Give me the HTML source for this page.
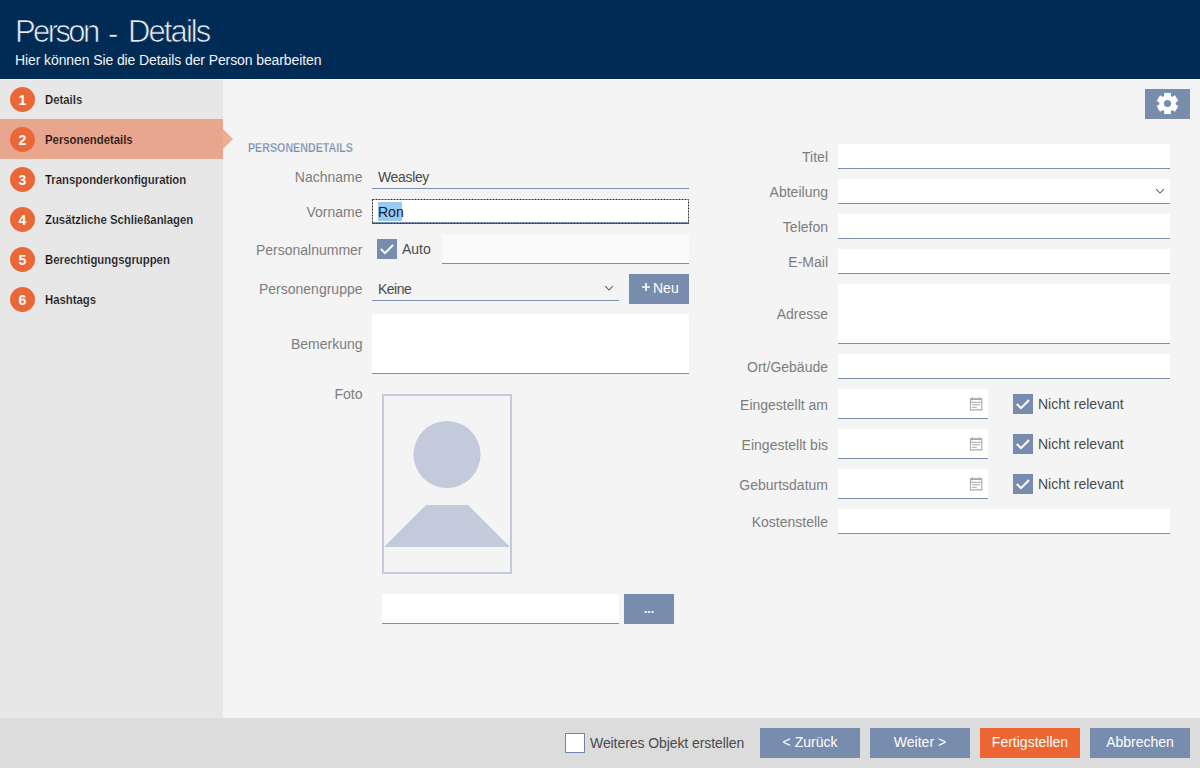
<!DOCTYPE html>
<html><head><meta charset="utf-8">
<style>
*{box-sizing:border-box;margin:0;padding:0}
html,body{width:1200px;height:768px;overflow:hidden;background:#f4f4f4;font-family:"Liberation Sans",sans-serif;position:relative}
.a{position:absolute}
.ttl{top:16px;font-size:31px!important;line-height:31px!important;color:#e9edf3;-webkit-text-stroke:0.7px #002b55}
.t{position:absolute;white-space:nowrap;line-height:14px;font-size:14px}
#hdr{left:0;top:0;width:1200px;height:79px;background:#002b55}
#hline{left:0;top:79px;width:1200px;height:1px;background:linear-gradient(90deg,#f3f1ef 0,#f3f1ef 223px,#fff 223px)}
#side{left:0;top:80px;width:223px;height:638px;background:#e7e7e7}
#foot{left:0;top:718px;width:1200px;height:50px;background:#dcdcdc}
.circ{position:absolute;left:10px;width:25px;height:25px;border-radius:50%;background:#ea6837;color:#fff;font-weight:700;font-size:14px;line-height:27px;text-align:center}
.nav{position:absolute;left:45px;font-weight:700;font-size:13px;line-height:13px;color:#111;-webkit-text-stroke:0.2px #e7e7e7;white-space:nowrap;transform:scaleX(0.873);transform-origin:0 0}
.lbl{position:absolute;white-space:nowrap;font-size:14px;line-height:14px;color:#7d7d7d;text-align:right}
.lL{right:837.5px}
.lR{right:372px}
.fld{position:absolute;background:#fff;border-bottom:1px solid #7e90b2}
.val{position:absolute;white-space:nowrap;font-size:14px;line-height:14px;color:#4a4a4a}
.btn{position:absolute;background:#788cae;color:#fff;font-size:14px;text-align:center}
.chk{position:absolute;width:20px;height:20px;background:#788cae}
</style></head><body>
<div id="hdr" class="a"></div>
<div id="hline" class="a"></div>
<div class="t ttl" style="left:15px;letter-spacing:-2.6px">Person</div>
<div class="t ttl" style="left:108px;top:17.5px">-</div>
<div class="t ttl" style="left:128px;letter-spacing:-1.9px">Details</div>
<div class="t" style="left:15px;top:53px;font-size:14px;line-height:14px;color:#f2f4f8;letter-spacing:-0.1px">Hier können Sie die Details der Person bearbeiten</div>

<div id="side" class="a"></div>
<div class="a" style="left:0;top:119px;width:223px;height:40px;background:#e9a68e"></div>
<svg class="a" style="left:223px;top:129px" width="11" height="21"><path d="M0 0 L10 10 L0 20Z" fill="#eeac95"/></svg>

<div class="circ" style="top:87px">1</div>
<div class="circ" style="top:127px">2</div>
<div class="circ" style="top:167px">3</div>
<div class="circ" style="top:207px">4</div>
<div class="circ" style="top:247px">5</div>
<div class="circ" style="top:287px">6</div>
<div class="nav" style="top:93px">Details</div>
<div class="nav" style="top:133px;-webkit-text-stroke-color:#e9a68e">Personendetails</div>
<div class="nav" style="top:173px">Transponderkonfiguration</div>
<div class="nav" style="top:213px">Zusätzliche Schließanlagen</div>
<div class="nav" style="top:253px">Berechtigungsgruppen</div>
<div class="nav" style="top:293px">Hashtags</div>

<!-- gear -->
<div class="btn" style="left:1145px;top:89px;width:45px;height:30px"></div>
<svg class="a" style="left:1156px;top:92px" width="23" height="23" viewBox="-11.5 -11.5 23 23"><g fill="#fff"><rect x="-3.3" y="-10.6" width="6.6" height="5" transform="rotate(0)"/><rect x="-3.3" y="-10.6" width="6.6" height="5" transform="rotate(60)"/><rect x="-3.3" y="-10.6" width="6.6" height="5" transform="rotate(120)"/><rect x="-3.3" y="-10.6" width="6.6" height="5" transform="rotate(180)"/><rect x="-3.3" y="-10.6" width="6.6" height="5" transform="rotate(240)"/><rect x="-3.3" y="-10.6" width="6.6" height="5" transform="rotate(300)"/><circle r="8.2"/></g><circle r="3.6" fill="#788cae"/></svg>

<div class="t" style="left:248px;top:142px;font-size:12px;line-height:12px;font-weight:700;color:#7a8db0;transform:scaleX(0.89);transform-origin:0 0;-webkit-text-stroke:0.25px #f4f4f4">PERSONENDETAILS</div>

<!-- left labels -->
<div class="lbl lL" style="top:170px">Nachname</div>
<div class="lbl lL" style="top:205px">Vorname</div>
<div class="lbl lL" style="top:243px">Personalnummer</div>
<div class="lbl lL" style="top:282px">Personengruppe</div>
<div class="lbl lL" style="top:337px">Bemerkung</div>
<div class="lbl lL" style="top:387px">Foto</div>

<!-- left fields -->
<div class="a" style="left:372px;top:188px;width:317px;height:1px;background:#7e90b2"></div>
<div class="val" style="left:378px;top:170px;letter-spacing:-0.35px">Weasley</div>
<div class="fld" style="left:372px;top:199px;width:317px;height:25px"></div>
<div class="a" style="left:372px;top:222px;width:317px;height:1px;background:#7e90b2"></div>
<svg class="a" style="left:372px;top:199px" width="317" height="25"><rect x="0.5" y="0.5" width="316" height="24" fill="none" stroke="#333" stroke-dasharray="2 1"/></svg>
<div class="a" style="left:378px;top:202px;width:24px;height:19px;background:#99c9ef"></div>
<div class="val" style="left:378px;top:205px;color:#0a1e3c">Ron</div>

<div class="chk" style="left:377px;top:239px"><svg class="a" width="20" height="20" viewBox="0 0 20 20" style="left:0;top:0"><path d="M3.8 10 L8 14.1 L16.1 6" fill="none" stroke="#fff" stroke-width="2"/></svg></div>
<div class="val" style="left:402px;top:242px">Auto</div>
<div class="fld" style="left:442px;top:234px;width:247px;height:30px;background:#fafafa"></div>

<div class="a" style="left:372px;top:300px;width:247px;height:1px;background:#7e90b2"></div>
<div class="val" style="left:378px;top:282px;letter-spacing:-0.5px">Keine</div>
<svg class="a" style="left:604px;top:285px" width="10" height="6"><path d="M1.2 1.2 L5 5 L8.8 1.2" fill="none" stroke="#5c5c5c" stroke-width="1.05"/></svg>
<div class="btn" style="left:629px;top:274px;width:60px;height:30px"></div>
<svg class="a" style="left:641px;top:282px" width="11" height="11"><path d="M1 5H9M5 1V9" stroke="#fff" stroke-width="1.6"/></svg><div class="t" style="left:653px;top:281px;font-size:14px;color:#fff">Neu</div>

<div class="fld" style="left:372px;top:314px;width:317px;height:60px"></div>

<div class="a" style="left:382px;top:394px;width:130px;height:180px;border:2px solid #c2cadc"></div>
<svg class="a" style="left:382px;top:394px" width="130" height="180"><circle cx="65" cy="60.5" r="33.5" fill="#c2cadc"/><path d="M44 111 L86 111 L128 153 L2 153Z" fill="#c2cadc"/></svg>

<div class="fld" style="left:382px;top:594px;width:237px;height:30px"></div>
<div class="btn" style="left:624px;top:594px;width:50px;height:30px"></div>
<div class="t" style="left:644px;top:602px;font-size:12px;color:#fff;font-weight:700">...</div>

<!-- right labels -->
<div class="lbl lR" style="top:150px">Titel</div>
<div class="lbl lR" style="top:185px">Abteilung</div>
<div class="lbl lR" style="top:220px">Telefon</div>
<div class="lbl lR" style="top:255px">E-Mail</div>
<div class="lbl lR" style="top:307px">Adresse</div>
<div class="lbl lR" style="top:360px">Ort/Gebäude</div>
<div class="lbl lR" style="top:398px">Eingestellt am</div>
<div class="lbl lR" style="top:438px">Eingestellt bis</div>
<div class="lbl lR" style="top:478px">Geburtsdatum</div>
<div class="lbl lR" style="top:515px">Kostenstelle</div>

<div class="fld" style="left:838px;top:144px;width:332px;height:25px"></div>
<div class="fld" style="left:838px;top:179px;width:332px;height:25px"></div>
<svg class="a" style="left:1155px;top:188px" width="10" height="6"><path d="M1.2 1.2 L5 5 L8.8 1.2" fill="none" stroke="#5c5c5c" stroke-width="1.05"/></svg>
<div class="fld" style="left:838px;top:214px;width:332px;height:25px"></div>
<div class="fld" style="left:838px;top:249px;width:332px;height:25px"></div>
<div class="fld" style="left:838px;top:284px;width:332px;height:60px"></div>
<div class="fld" style="left:838px;top:354px;width:332px;height:25px"></div>
<div class="fld" style="left:838px;top:389px;width:150px;height:30px"></div>
<svg class="a" style="left:969px;top:396px" width="16" height="16" viewBox="0 0 16 16"><g fill="none" stroke="#a9a9a9"><path d="M1.5 3 H12.8 V13.9 H1.5 Z" stroke-width="1.1"/><path d="M1.5 3.1H12.8" stroke-width="1.8"/><path d="M1.5 6.3H12.8M3.5 1V4.4M10.7 1V4.4M3 8.8H11M3 11.3H7.8" stroke-width="1"/></g></svg>
<div class="fld" style="left:838px;top:429px;width:150px;height:30px"></div>
<svg class="a" style="left:969px;top:436px" width="16" height="16" viewBox="0 0 16 16"><g fill="none" stroke="#a9a9a9"><path d="M1.5 3 H12.8 V13.9 H1.5 Z" stroke-width="1.1"/><path d="M1.5 3.1H12.8" stroke-width="1.8"/><path d="M1.5 6.3H12.8M3.5 1V4.4M10.7 1V4.4M3 8.8H11M3 11.3H7.8" stroke-width="1"/></g></svg>
<div class="fld" style="left:838px;top:469px;width:150px;height:30px"></div>
<svg class="a" style="left:969px;top:476px" width="16" height="16" viewBox="0 0 16 16"><g fill="none" stroke="#a9a9a9"><path d="M1.5 3 H12.8 V13.9 H1.5 Z" stroke-width="1.1"/><path d="M1.5 3.1H12.8" stroke-width="1.8"/><path d="M1.5 6.3H12.8M3.5 1V4.4M10.7 1V4.4M3 8.8H11M3 11.3H7.8" stroke-width="1"/></g></svg>
<div class="fld" style="left:838px;top:509px;width:332px;height:25px"></div>
<div class="chk" style="left:1013px;top:394px"><svg class="a" width="20" height="20" viewBox="0 0 20 20" style="left:0;top:0"><path d="M3.8 10 L8 14.1 L16.1 6" fill="none" stroke="#fff" stroke-width="2"/></svg></div>
<div class="chk" style="left:1013px;top:434px"><svg class="a" width="20" height="20" viewBox="0 0 20 20" style="left:0;top:0"><path d="M3.8 10 L8 14.1 L16.1 6" fill="none" stroke="#fff" stroke-width="2"/></svg></div>
<div class="chk" style="left:1013px;top:474px"><svg class="a" width="20" height="20" viewBox="0 0 20 20" style="left:0;top:0"><path d="M3.8 10 L8 14.1 L16.1 6" fill="none" stroke="#fff" stroke-width="2"/></svg></div>
<div class="val" style="left:1038px;top:398px;margin-top:-1px">Nicht relevant</div>
<div class="val" style="left:1038px;top:438px;margin-top:-1px">Nicht relevant</div>
<div class="val" style="left:1038px;top:478px;margin-top:-1px">Nicht relevant</div>

<div id="foot" class="a"></div>
<div class="a" style="left:565px;top:733px;width:20px;height:20px;background:#fff;border:1.5px solid #6f86aa"></div>
<div class="val" style="left:590px;top:736px;letter-spacing:-0.08px">Weiteres Objekt erstellen</div>
<div class="btn" style="left:760px;top:728px;width:100px;height:30px;line-height:28px">&lt; Zurück</div>
<div class="btn" style="left:870px;top:728px;width:100px;height:30px;line-height:28px">Weiter &gt;</div>
<div class="btn" style="left:980px;top:728px;width:100px;height:30px;line-height:28px;background:#ec6532">Fertigstellen</div>
<div class="btn" style="left:1090px;top:728px;width:100px;height:30px;line-height:28px">Abbrechen</div>
</body></html>
